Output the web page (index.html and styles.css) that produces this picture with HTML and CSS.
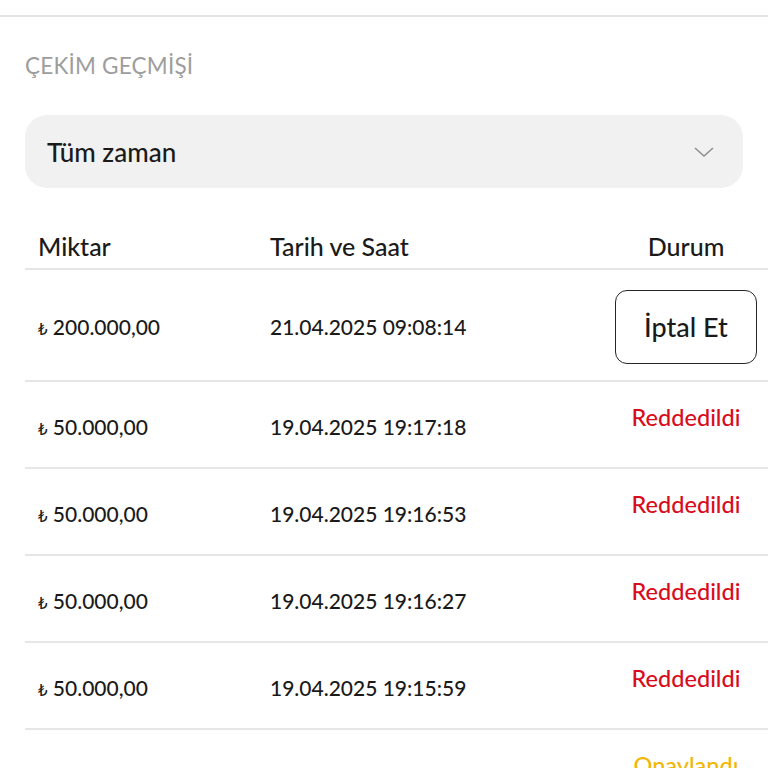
FILE: index.html
```html
<!DOCTYPE html>
<html lang="tr">
<head>
    <meta charset="UTF-8">
    <meta name="viewport" content="width=device-width, initial-scale=1.0">
    <title>Çekim Geçmişi</title>
    <link rel="stylesheet" href="styles.css">
</head>
<body>
    <div class="top-bar"></div>
    <div class="history">
        <div class="section-title">ÇEKİM GEÇMİŞİ</div>
        <div class="period-select">
            <span>Tüm zaman</span>
            <svg class="chevron" width="22" height="14" viewBox="0 0 22 14">
                <polyline points="2,3 11,11 20,3" fill="none" stroke="#8c8c8c" stroke-width="1.4"/>
            </svg>
        </div>
        <div class="table">
            <div class="row head">
                <div class="cell">Miktar</div>
                <div class="cell">Tarih ve Saat</div>
                <div class="cell status">Durum</div>
            </div>
            <div class="row pending">
                <div class="cell"><span class="lira">₺</span> 200.000,00</div>
                <div class="cell">21.04.2025 09:08:14</div>
                <div class="cell status"><button class="cancel-button">İptal Et</button></div>
            </div>
            <div class="row">
                <div class="cell"><span class="lira">₺</span> 50.000,00</div>
                <div class="cell">19.04.2025 19:17:18</div>
                <div class="cell status rejected">Reddedildi</div>
            </div>
            <div class="row">
                <div class="cell"><span class="lira">₺</span> 50.000,00</div>
                <div class="cell">19.04.2025 19:16:53</div>
                <div class="cell status rejected">Reddedildi</div>
            </div>
            <div class="row">
                <div class="cell"><span class="lira">₺</span> 50.000,00</div>
                <div class="cell">19.04.2025 19:16:27</div>
                <div class="cell status rejected">Reddedildi</div>
            </div>
            <div class="row">
                <div class="cell"><span class="lira">₺</span> 50.000,00</div>
                <div class="cell">19.04.2025 19:15:59</div>
                <div class="cell status rejected">Reddedildi</div>
            </div>
            <div class="row">
                <div class="cell"><span class="lira">₺</span> 40.000,00</div>
                <div class="cell">7.03.2025 09:40:35</div>
                <div class="cell status approved">Onaylandı</div>
            </div>
        </div>
    </div>
</body>
</html>
```

FILE: styles.css
```css
body {
    margin: 0;
    background: #fff;
    font-family: Lato, "DejaVu Sans", sans-serif;
    color: #1a1a1a;
    width: 768px;
    height: 768px;
    overflow: hidden;
}
.top-bar {
    height: 15px;
    border-bottom: 2px solid #e4e4e4;
}
.history {
    padding: 0 0 0 25px;
}
.section-title {
    margin-top: 36px;
    font-size: 22.5px;
    line-height: 26px;
    color: #9d9d9d;
    letter-spacing: 0.2px;
}
.period-select {
    display: flex;
    justify-content: space-between;
    align-items: center;
    margin-top: 36px;
    width: 718px;
    height: 73px;
    box-sizing: border-box;
    padding: 0 28px 0 22px;
    background: #f1f1f1;
    border-radius: 22px;
    font-size: 26px;
    font-weight: 500;
}
.table {
    width: 743px;
}
.row {
    display: grid;
    grid-template-columns: 232px 347px 164px;
    box-sizing: border-box;
    height: 87px;
    padding-top: 4px;
    align-items: center;
    border-bottom: 2px solid #e6e6e6;
    font-size: 21px;
    font-weight: 500;
    line-height: 28px;
}
.row.head {
    height: 82px;
    padding-top: 43px;
    align-items: start;
    font-size: 25px;
    line-height: 30px;
}
.row.pending {
    height: 112px;
    padding-top: 3px;
}
.cell {
    padding-left: 13px;
}
.cell.status {
    padding-left: 0;
    text-align: center;
}
.row .rejected,
.row .approved {
    align-self: start;
    padding-top: 17px;
    font-size: 23.5px;
}
.rejected {
    color: #d80c1c;
}
.approved {
    color: #f2b705;
}
.lira {
    font-size: 15px;
    line-height: 1;
    font-family: "DejaVu Sans", sans-serif;
}
.cancel-button {
    display: block;
    margin: 0 auto;
    width: 142px;
    height: 74px;
    background: #fff;
    border: 1.5px solid #262626;
    border-radius: 12px;
    font-family: Lato, sans-serif;
    font-size: 27px;
    font-weight: 500;
    color: #1a1a1a;
}
```
